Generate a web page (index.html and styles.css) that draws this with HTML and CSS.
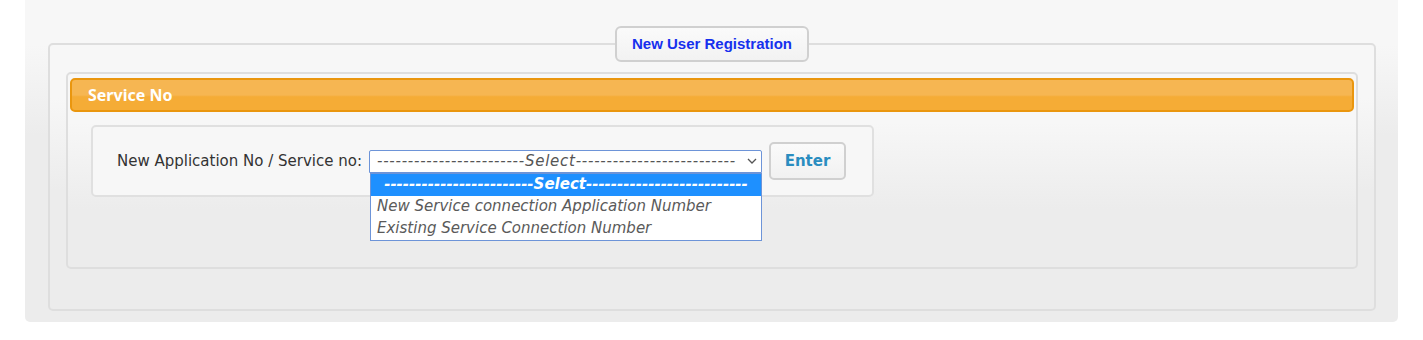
FILE: index.html
```html
<!DOCTYPE html>
<html lang="en">
<head>
  <title>New User Registration</title>
  <meta charset="utf-8">
  <meta name="viewport" content="width=device-width, initial-scale=1">
  <link rel="stylesheet" href="styles.css">
</head>
<body>
  <div class="page">
    <fieldset class="register">
      <legend>New User Registration</legend>

      <div class="panel">
        <div class="panel-head">Service No</div>

        <div class="form-box">
          <label class="form-label">New Application No / Service no:</label>
          <div class="select-wrap">
            <div class="select">
              <span>------------------------Select--------------------------</span>
              <svg class="chevron" width="10" height="6" viewBox="0 0 10 6"><path d="M1 1l4 4 4-4" fill="none" stroke="#555" stroke-width="1.3"/></svg>
            </div>
            <ul class="options">
              <li class="selected">------------------------Select--------------------------</li>
              <li>New Service connection Application Number</li>
              <li>Existing Service Connection Number</li>
            </ul>
          </div>
          <button class="btn-enter">Enter</button>
        </div>
      </div>
    </fieldset>
  </div>
</body>
</html>
```

FILE: styles.css
```css
* {
  box-sizing: border-box;
}

body {
  margin: 0;
  background: #ffffff;
  font-family: "DejaVu Sans", sans-serif;
  font-size: 14px;
  color: #333333;
}

.page {
  width: 1373px;
  height: 322px;
  margin-left: 25px;
  padding-top: 26px;
  background: linear-gradient(#f7f7f7 14%, #ececec 42%);
  border-radius: 0 0 5px 5px;
}

.register {
  margin: 0 22px 0 23px;
  padding: 10px 16px 40px;
  border: 2px solid #dedede;
  border-radius: 5px;
  background: linear-gradient(#f7f7f7 20%, #ececec 55%);
}

.register legend {
  margin: 0 auto;
  height: 36px;
  padding: 0 15px;
  border: 2px solid #d0d0d0;
  border-radius: 6px;
  background: linear-gradient(#fafafa, #f2f2f2);
  font-family: "Liberation Sans", Arial, sans-serif;
  font-weight: bold;
  font-size: 15px;
  line-height: 32px;
  color: #1630ee;
}

.panel {
  height: 197px;
  padding: 4px 2px;
  border: 2px solid #dedede;
  border-radius: 5px;
  background: linear-gradient(#f7f7f7 25%, #ececec 70%);
}

.panel-head {
  height: 34px;
  padding: 1px 0 0 16px;
  border: 2px solid #ea960e;
  border-radius: 5px;
  background: linear-gradient(#f6b652 50%, #f5ac36 56%);
  color: #ffffff;
  font-family: "Noto Sans", sans-serif;
  font-weight: bold;
  font-size: 16px;
  line-height: 29px;
}

.form-box {
  display: flex;
  align-items: center;
  width: 783px;
  height: 72px;
  margin: 13px 0 0 21px;
  padding: 0 24px;
  border: 2px solid #e0e0e0;
  border-radius: 5px;
  background: #f7f7f7;
}

.form-label {
  margin-right: 7px;
  font-size: 15px;
  color: #333333;
}

.select-wrap {
  position: relative;
}

.select {
  display: flex;
  align-items: center;
  justify-content: space-between;
  width: 393px;
  height: 23px;
  padding: 0 4px 0 7px;
  border: 1px solid #6d94d8;
  border-radius: 2px 2px 0 0;
  background: #ffffff;
  font-style: italic;
  font-size: 15px;
  letter-spacing: 0.75px;
  color: #555555;
  white-space: nowrap;
  overflow: hidden;
}

.options {
  position: absolute;
  top: 23px;
  left: 1px;
  width: 392px;
  margin: 0;
  padding: 0;
  list-style: none;
  border: 1px solid #6d94d8;
  background: #ffffff;
  font-style: italic;
  font-size: 15px;
  color: #5a5a5a;
}

.options li {
  height: 22px;
  padding-left: 6px;
  line-height: 21px;
  white-space: nowrap;
  overflow: hidden;
}

.options li.selected {
  background: #1e90ff;
  color: #ffffff;
  font-weight: bold;
  text-align: center;
  padding-left: 0;
}

.btn-enter {
  width: 77px;
  height: 38px;
  margin-left: 7px;
  border: 2px solid #d0d0d0;
  border-radius: 5px;
  background: linear-gradient(#fafafa, #f1f1f1);
  font-family: inherit;
  font-weight: bold;
  font-size: 15px;
  color: #2a8dc0;
}
```
